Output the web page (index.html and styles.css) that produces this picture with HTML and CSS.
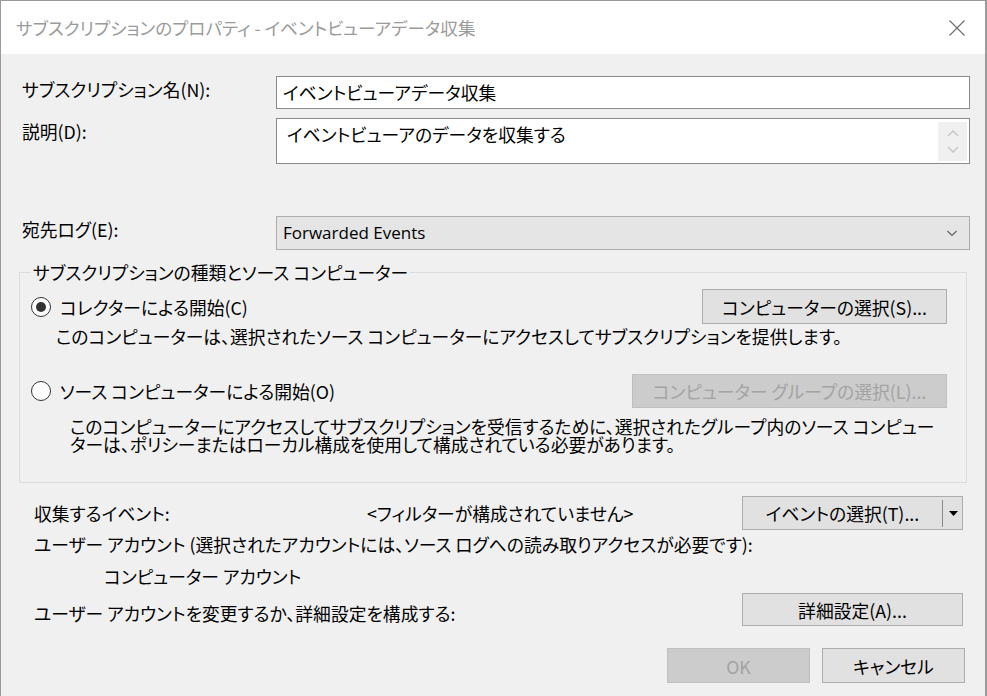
FILE: index.html
```html
<!DOCTYPE html>
<html lang="ja">
<head>
    <meta charset="utf-8">
    <title>サブスクリプションのプロパティ</title>
    <link rel="stylesheet" href="styles.css">
</head>
<body>
<div class="window">
    <div class="titlebar">
        <span class="title">サブスクリプションのプロパティ - イベントビューアデータ収集</span>
        <svg class="close" width="16" height="16" viewBox="0 0 16 16">
            <path d="M0.5 0.5 L15.5 15.5 M15.5 0.5 L0.5 15.5" stroke="#6b6b6b" stroke-width="1.1" fill="none"/>
        </svg>
    </div>

    <div class="content">
        <div class="field-row">
            <label class="field-label">サブスクリプション名(N):</label>
            <div class="textbox">イベントビューアデータ収集</div>
        </div>

        <div class="field-row desc-row">
            <label class="field-label">説明(D):</label>
            <div class="textbox memo">
                <span class="memo-text">イベントビューアのデータを収集する</span>
                <div class="spin">
                    <svg width="14" height="8" viewBox="0 0 14 8"><path d="M2 7 L7 2 L12 7" stroke="#c4c4c4" stroke-width="1.3" fill="none"/></svg>
                    <svg width="14" height="8" viewBox="0 0 14 8"><path d="M2 1 L7 6 L12 1" stroke="#c4c4c4" stroke-width="1.3" fill="none"/></svg>
                </div>
            </div>
        </div>

        <div class="field-row dest-row">
            <label class="field-label">宛先ログ(E):</label>
            <div class="combo">
                <span class="combo-text">Forwarded Events</span>
                <svg width="12" height="8" viewBox="0 0 12 8"><path d="M1.5 2 L6 6.5 L10.5 2" stroke="#606060" stroke-width="1.1" fill="none"/></svg>
            </div>
        </div>

        <fieldset class="group">
            <legend>サブスクリプションの種類とソース コンピューター</legend>

            <div class="option-row">
                <label class="radio-label"><span class="radio checked"></span>コレクターによる開始(C)</label>
                <button class="btn btn-select">コンピューターの選択(S)...</button>
            </div>
            <p class="note">このコンピューターは、選択されたソース コンピューターにアクセスしてサブスクリプションを提供します。</p>

            <div class="option-row second">
                <label class="radio-label"><span class="radio"></span>ソース コンピューターによる開始(O)</label>
                <button class="btn btn-group" disabled>コンピューター グループの選択(L)...</button>
            </div>
            <p class="note note-wide">このコンピューターにアクセスしてサブスクリプションを受信するために、選択されたグループ内のソース コンピュー<br>ターは、ポリシーまたはローカル構成を使用して構成されている必要があります。</p>
        </fieldset>

        <div class="events-row">
            <span class="events-label">収集するイベント:</span>
            <span class="events-filter">&lt;フィルターが構成されていません&gt;</span>
            <div class="btn split">
                <span class="split-main">イベントの選択(T)...</span>
                <span class="split-sep"></span>
                <svg class="split-arrow" width="9" height="5" viewBox="0 0 9 5"><path d="M0 0 H9 L4.5 5 Z" fill="#000"/></svg>
            </div>
        </div>
        <div class="line account-line">ユーザー アカウント (選択されたアカウントには、ソース ログへの読み取りアクセスが必要です):</div>
        <div class="line account-name">コンピューター アカウント</div>
        <div class="advanced-row">
            <span>ユーザー アカウントを変更するか、詳細設定を構成する:</span>
            <button class="btn btn-advanced">詳細設定(A)...</button>
        </div>

        <div class="dialog-buttons">
            <button class="btn btn-dialog" disabled>OK</button>
            <button class="btn btn-dialog">キャンセル</button>
        </div>
    </div>
</div>
</body>
</html>
```

FILE: styles.css
```css
* {
    box-sizing: border-box;
}

body {
    margin: 0;
    background-color: #f0f0f0;
    font-family: "Noto Sans CJK JP", "Noto Sans", sans-serif;
    font-size: 17.8px;
    font-feature-settings: "palt";
    color: #000;
}

.window {
    width: 987px;
    height: 696px;
    background-color: #f0f0f0;
    border-top: 1px solid #9a9a9a;
    border-left: 1px solid #9a9a9a;
    border-right: 2px solid #9a9a9a;
    overflow: hidden;
}

/* タイトルバー */
.titlebar {
    height: 53px;
    background-color: #fff;
    display: flex;
    align-items: center;
    justify-content: space-between;
    padding: 0 20px 0 15px;
}

.title {
    color: #9b9b9b;
    font-size: 17.6px;
    line-height: 24px;
}

.close {
    display: block;
}

/* 本体 */
.content {
    padding: 0 16px 0 18px;
}

.field-row {
    display: grid;
    grid-template-columns: 254px 694px;
    align-items: start;
    padding-left: 3px;
    margin-top: 22px;
    line-height: 20px;
}

.desc-row {
    margin-top: 9px;
}

.dest-row {
    margin-top: 52px;
}

.field-label {
    padding-top: 3px;
}

.textbox {
    height: 33px;
    border: 1px solid #8a8a8a;
    background-color: #fff;
    padding: 0 6px;
    line-height: 31px;
}

.memo {
    height: 46px;
    display: flex;
    justify-content: space-between;
    align-items: flex-start;
    padding: 0 2px 0 10px;
    line-height: 20px;
}

.memo-text {
    padding-top: 5px;
}

.spin {
    width: 29px;
    height: 39px;
    margin-top: 3px;
    background-color: #f0f0f0;
    display: flex;
    flex-direction: column;
    align-items: center;
    justify-content: space-around;
    padding: 2px 0;
}

.spin svg {
    display: block;
}

.combo {
    height: 34px;
    border: 1px solid #adadad;
    background-color: #e5e5e5;
    display: flex;
    align-items: center;
    justify-content: space-between;
    padding: 0 11px 0 6px;
}

.combo-text {
    font-family: "Open Sans", "Noto Sans", sans-serif;
    font-size: 17px;
}

.combo svg {
    display: block;
}

/* グループボックス */
.group {
    margin: 14px 2px 0 0;
    min-width: 0;
    border: 1px solid #dcdcdc;
    padding: 9px 19px 29px 11px;
}

.group legend {
    padding: 0 2px;
    margin-left: 0;
    line-height: 16px;
}

.option-row {
    display: flex;
    align-items: center;
    justify-content: space-between;
    height: 35px;
}

.option-row.second {
    height: 34px;
    margin-top: 30px;
}

.radio-label {
    display: flex;
    align-items: center;
    gap: 9px;
}

.radio {
    width: 20px;
    height: 20px;
    border: 1px solid #333;
    border-radius: 50%;
    background-color: #fff;
    display: flex;
    align-items: center;
    justify-content: center;
}

.radio.checked::after {
    content: "";
    width: 10px;
    height: 10px;
    border-radius: 50%;
    background-color: #333;
}

.note {
    margin: 4px 0 0;
    padding-left: 25px;
    line-height: 16px;
    white-space: nowrap;
}

.note-wide {
    margin-top: 9px;
    padding-left: 39px;
    line-height: 18px;
}

/* ボタン */
.btn {
    font-family: inherit;
    font-size: 17.8px;
    font-feature-settings: "palt";
    color: #000;
    background-color: #e1e1e1;
    border: 1px solid #adadad;
    padding: 0;
    height: 35px;
}

.btn:disabled {
    background-color: #cccccc;
    border-color: #bfbfbf;
    color: #a3a3a3;
}

.btn-select {
    width: 245px;
}

.btn-group {
    width: 315px;
    height: 34px;
}

/* 下部 */
.events-row {
    display: flex;
    align-items: center;
    margin-top: 13px;
    padding: 0 6px 0 15px;
    height: 34px;
}

.events-label {
    width: 333px;
}

.events-filter {
    flex: 1;
}

.split {
    width: 221px;
    height: 34px;
    display: flex;
    align-items: center;
}

.split-main {
    width: 199px;
    text-align: center;
}

.split-sep {
    width: 1px;
    height: 27px;
    background-color: #8a8a8a;
}

.split-arrow {
    display: block;
    margin-left: 6px;
}

.line {
    line-height: 20px;
    padding-left: 15px;
}

.account-line {
    margin-top: 4px;
}

.account-name {
    margin-top: 12px;
    padding-left: 85px;
}

.advanced-row {
    display: flex;
    align-items: center;
    justify-content: space-between;
    margin-top: 7px;
    padding: 0 6px 0 15px;
}

.advanced-row span {
    padding-top: 6px;
}

.btn-advanced {
    width: 221px;
    height: 33px;
}

.dialog-buttons {
    display: flex;
    justify-content: flex-end;
    gap: 12px;
    margin-top: 22px;
    padding-right: 4px;
}

.btn-dialog {
    width: 143px;
    height: 35px;
}
```
